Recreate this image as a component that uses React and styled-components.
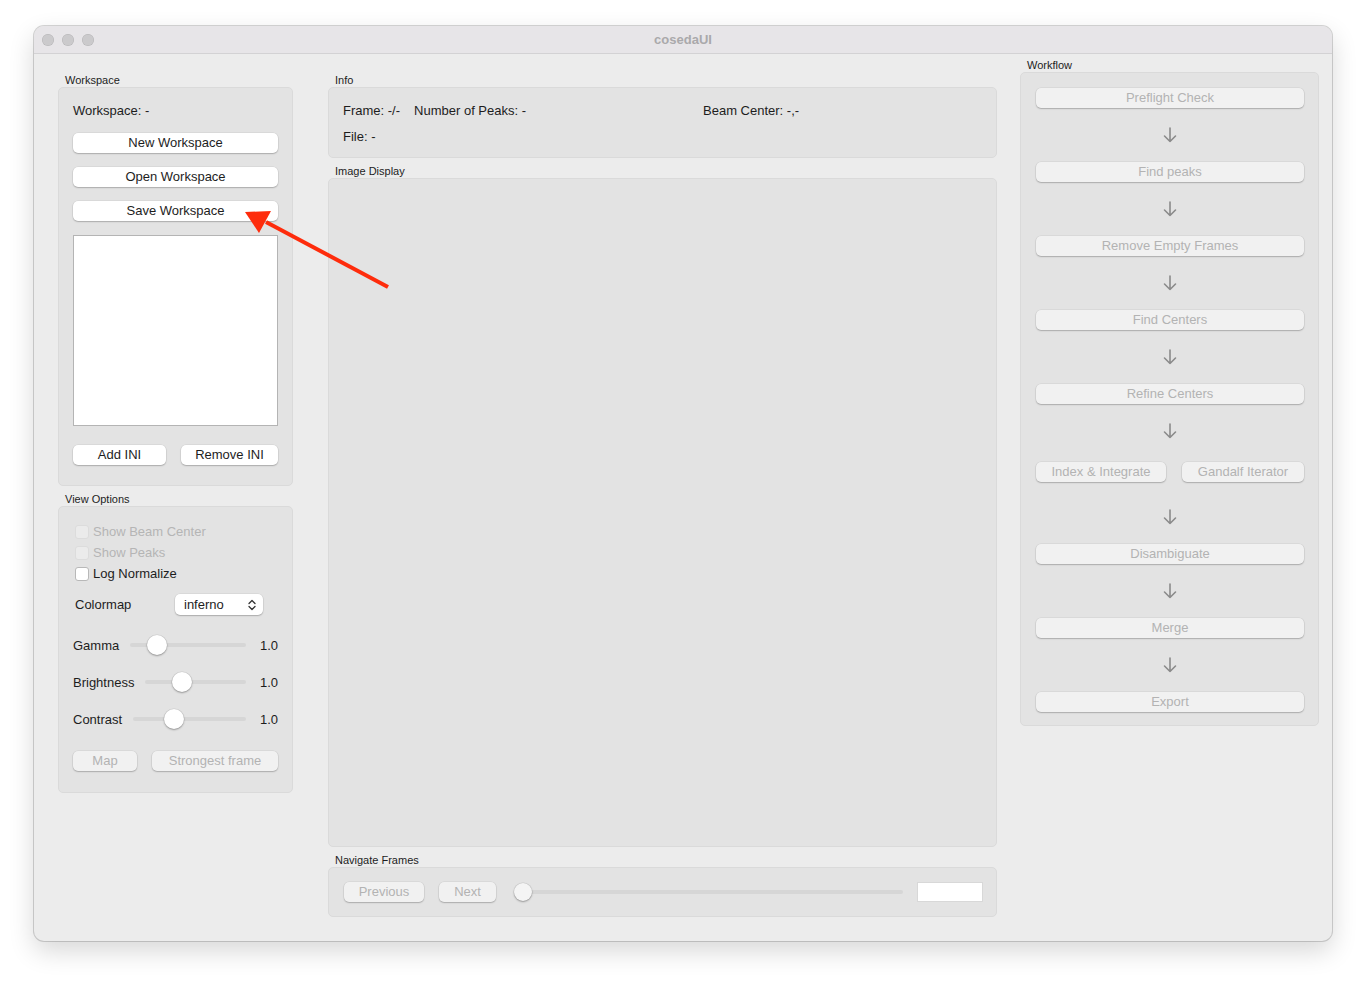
import React from 'react';
import styled, { createGlobalStyle } from 'styled-components';

const GlobalStyle = createGlobalStyle`
  html, body {
    margin: 0;
    padding: 0;
    background: #ffffff;
    overflow: hidden;
  }
  body {
    font-family: "Liberation Sans", Arial, sans-serif;
    color: #1d1d1d;
  }
`;

const Page = styled.div`
  position: relative;
  width: 1366px;
  height: 984px;
  padding: 26px 34px 0;
  box-sizing: border-box;
`;

const Window = styled.div`
  width: 1298px;
  height: 915px;
  border-radius: 10px;
  background: #ececec;
  box-shadow: 0 0 0 1px rgba(0, 0, 0, 0.16), 0 10px 26px rgba(0, 0, 0, 0.16);
  overflow: hidden;
  display: flex;
  flex-direction: column;
`;

const TitleBar = styled.div`
  height: 28px;
  flex-shrink: 0;
  display: grid;
  grid-template-columns: 1fr auto 1fr;
  align-items: center;
  background: #e7e5e8;
  border-bottom: 1px solid #d3d2d4;
  box-sizing: border-box;
`;

const Lights = styled.div`
  display: flex;
  gap: 8px;
  padding-left: 8px;
`;

const Light = styled.span`
  width: 12px;
  height: 12px;
  border-radius: 50%;
  background: #cbcacc;
  box-shadow: inset 0 0 0 0.5px rgba(0, 0, 0, 0.12);
`;

const Title = styled.div`
  font-size: 13px;
  font-weight: bold;
  color: #aaa9ab;
`;

const Body = styled.div`
  flex: 1;
  display: flex;
  align-items: stretch;
  padding: 0 13px 0 24px;
`;

const Column = styled.div`
  width: ${p => p.$width}px;
  margin-right: ${p => p.$gap || 0}px;
  padding-top: ${p => p.$top}px;
  padding-bottom: 24px;
  display: flex;
  flex-direction: column;
  flex-shrink: 0;
  box-sizing: border-box;
`;

const Group = styled.section`
  display: flex;
  flex-direction: column;
  margin-bottom: ${p => (p.$last ? 0 : 6)}px;
  flex: ${p => (p.$grow ? 1 : 'none')};
`;

const GroupLabel = styled.div`
  font-size: 11px;
  line-height: 14px;
  height: 14px;
  margin-left: 7px;
  color: #1d1d1d;
`;

const GroupBox = styled.div`
  background: #e3e3e3;
  border: 1px solid #dadada;
  border-radius: 5px;
  box-sizing: border-box;
  padding: ${p => p.$pad || '14px'};
  flex: 1;
  display: flex;
  flex-direction: column;
`;

const Text = styled.div`
  font-size: 13px;
  line-height: 16px;
  height: 16px;
  white-space: nowrap;
`;

const Button = styled.div`
  height: 20px;
  box-sizing: border-box;
  border-radius: 5px;
  background: ${p => (p.$disabled ? '#f1f1f1' : '#ffffff')};
  color: ${p => (p.$disabled ? '#b3b3b3' : '#1d1d1d')};
  box-shadow: 0 0 0 0.5px rgba(0, 0, 0, 0.08), 0 1px 1.5px rgba(0, 0, 0, 0.22);
  font-size: 13px;
  line-height: 20px;
  text-align: center;
  white-space: nowrap;
  width: ${p => (p.$w ? `${p.$w}px` : 'auto')};
  flex: ${p => (p.$w ? 'none' : 1)};
  margin-left: ${p => p.$ml || 0}px;
`;

const Stack = styled.div`
  display: flex;
  flex-direction: column;
  gap: ${p => p.$gap}px;
  margin-top: ${p => p.$mt || 0}px;
`;

const Row = styled.div`
  display: flex;
  align-items: center;
  gap: ${p => p.$gap || 0}px;
  margin-top: ${p => p.$mt || 0}px;
`;

const ListBox = styled.div`
  height: 191px;
  background: #ffffff;
  border: 1px solid #b4b4b4;
  box-sizing: border-box;
`;

const CheckRow = styled.label`
  display: flex;
  align-items: center;
  gap: 4px;
  height: 21px;
  padding-left: 2px;
  font-size: 13px;
  color: ${p => (p.$disabled ? '#b5b5b5' : '#1d1d1d')};
`;

const Box = styled.span`
  width: 14px;
  height: 14px;
  box-sizing: border-box;
  border-radius: 3px;
  background: ${p => (p.$disabled ? '#ebebeb' : '#ffffff')};
  border: 1px solid ${p => (p.$disabled ? '#dcdcdc' : '#b8b8b8')};
`;

const SelectLabel = styled.div`
  font-size: 13px;
  width: 100px;
  padding-left: 2px;
`;

const Select = styled.div`
  width: 88px;
  height: 21px;
  box-sizing: border-box;
  border-radius: 5px;
  background: #ffffff;
  box-shadow: 0 0 0 0.5px rgba(0, 0, 0, 0.08), 0 1px 1.5px rgba(0, 0, 0, 0.22);
  display: flex;
  align-items: center;
  justify-content: space-between;
  padding: 0 7px 0 9px;
  font-size: 13px;
`;

const SliderRow = styled.div`
  display: flex;
  align-items: center;
  height: 20px;
  margin-top: ${p => p.$mt}px;
  font-size: 13px;
`;

const Track = styled.div`
  position: relative;
  flex: 1;
  height: 4px;
  border-radius: 2px;
  background: #d6d6d6;
  margin: ${p => p.$margin || '0 14px 0 11px'};
`;

const Thumb = styled.span`
  position: absolute;
  top: 50%;
  left: ${p => p.$pos}px;
  width: ${p => p.$size || 20}px;
  height: ${p => p.$size || 20}px;
  margin-top: -${p => (p.$size || 20) / 2}px;
  border-radius: 50%;
  background: ${p => p.$color || '#ffffff'};
  box-shadow: 0 0 0 0.5px rgba(0, 0, 0, 0.1), 0 1px 2px rgba(0, 0, 0, 0.3);
`;

const Value = styled.span`
  width: 18px;
  text-align: right;
`;

const InfoGrid = styled.div`
  display: grid;
  grid-template-columns: 360px 1fr;
  row-gap: 10px;
  font-size: 13px;
  line-height: 16px;
`;

const InfoCell = styled.div`
  display: flex;
  gap: 14px;
  white-space: nowrap;
`;

const NavBox = styled(GroupBox)`
  flex-direction: row;
  align-items: center;
  height: 50px;
  flex: none;
  padding: 0 14px 0 15px;
`;

const TextField = styled.div`
  width: 64px;
  height: 18px;
  background: #ffffff;
  box-shadow: 0 0 0 1px #d8d8d8;
  margin-left: 15px;
`;

const ArrowSlot = styled.div`
  height: 54px;
  display: flex;
  align-items: center;
  justify-content: center;
`;

const PairRow = styled.div`
  display: flex;
  gap: 16px;
  padding: 4px 0 8px;
`;

const Annotation = styled.svg`
  position: absolute;
  left: 0;
  top: 0;
  pointer-events: none;
`;

function DownArrow() {
  return (
    <svg width="14" height="16" viewBox="0 0 14 16">
      <path d="M7 1 V14.5 M1.5 9 L7 14.5 L12.5 9" fill="none" stroke="#8a8a8a" strokeWidth="1.6" strokeLinecap="round" strokeLinejoin="round" />
    </svg>
  );
}

function UpDown() {
  return (
    <svg width="8" height="12" viewBox="0 0 8 12">
      <path d="M1 4.5 L4 1.5 L7 4.5 M1 7.5 L4 10.5 L7 7.5" fill="none" stroke="#333" strokeWidth="1.3" strokeLinecap="round" strokeLinejoin="round" />
    </svg>
  );
}

function Check({ label, disabled }) {
  return (
    <CheckRow $disabled={disabled}>
      <Box $disabled={disabled} />
      {label}
    </CheckRow>
  );
}

function Slider({ label, pos, mt }) {
  return (
    <SliderRow $mt={mt}>
      <span>{label}</span>
      <Track>
        <Thumb $pos={pos} />
      </Track>
      <Value>1.0</Value>
    </SliderRow>
  );
}

function Step({ children, first }) {
  return (
    <>
      {!first && (
        <ArrowSlot>
          <DownArrow />
        </ArrowSlot>
      )}
      {children}
    </>
  );
}

const steps = ['Preflight Check', 'Find peaks', 'Remove Empty Frames', 'Find Centers', 'Refine Centers'];
const tail = ['Disambiguate', 'Merge', 'Export'];

export default function App() {
  return (
    <Page>
      <GlobalStyle />
      <Window>
        <TitleBar>
          <Lights>
            <Light />
            <Light />
            <Light />
          </Lights>
          <Title>cosedaUI</Title>
          <div />
        </TitleBar>
        <Body>
          <Column $width={235} $gap={35} $top={19}>
            <Group>
              <GroupLabel>Workspace</GroupLabel>
              <GroupBox $pad="15px 14px 20px">
                <Text>Workspace: -</Text>
                <Stack $gap={14} $mt={14}>
                  <Button>New Workspace</Button>
                  <Button>Open Workspace</Button>
                  <Button>Save Workspace</Button>
                  <ListBox />
                </Stack>
                <Row $gap={15} $mt={19}>
                  <Button $w={93}>Add INI</Button>
                  <Button>Remove INI</Button>
                </Row>
              </GroupBox>
            </Group>
            <Group>
              <GroupLabel>View Options</GroupLabel>
              <GroupBox $pad="14px 14px 21px">
                <Check label="Show Beam Center" disabled />
                <Check label="Show Peaks" disabled />
                <Check label="Log Normalize" />
                <Row $mt={10}>
                  <SelectLabel>Colormap</SelectLabel>
                  <Select>
                    <span>inferno</span>
                    <UpDown />
                  </Select>
                </Row>
                <Slider label="Gamma" pos={17} mt={20} />
                <Slider label="Brightness" pos={27} mt={17} />
                <Slider label="Contrast" pos={31} mt={17} />
                <Row $gap={15} $mt={22}>
                  <Button $w={64} $disabled>Map</Button>
                  <Button $disabled>Strongest frame</Button>
                </Row>
              </GroupBox>
            </Group>
          </Column>

          <Column $width={669} $gap={23} $top={19}>
            <Group>
              <GroupLabel>Info</GroupLabel>
              <GroupBox $pad="15px 14px 12px">
                <InfoGrid>
                  <InfoCell>
                    <span>Frame: -/-</span>
                    <span>Number of Peaks: -</span>
                  </InfoCell>
                  <InfoCell>Beam Center: -,-</InfoCell>
                  <InfoCell>File: -</InfoCell>
                </InfoGrid>
              </GroupBox>
            </Group>
            <Group $grow>
              <GroupLabel>Image Display</GroupLabel>
              <GroupBox />
            </Group>
            <Group $last>
              <GroupLabel>Navigate Frames</GroupLabel>
              <NavBox>
                <Button $w={80} $disabled>Previous</Button>
                <Button $w={57} $ml={15} $disabled>Next</Button>
                <Track $margin="0 0 0 19px">
                  <Thumb $pos={-1} $size={18} $color="#f4f4f4" />
                </Track>
                <TextField />
              </NavBox>
            </Group>
          </Column>

          <Column $width={299} $top={4}>
            <Group>
              <GroupLabel>Workflow</GroupLabel>
              <GroupBox $pad="15px 14px 13px 15px">
                {steps.map((s, i) => (
                  <Step key={s} first={i === 0}>
                    <Button $disabled>{s}</Button>
                  </Step>
                ))}
                <Step>
                  <PairRow>
                    <Button $w={130} $disabled>Index &amp; Integrate</Button>
                    <Button $disabled>Gandalf Iterator</Button>
                  </PairRow>
                </Step>
                {tail.map(s => (
                  <Step key={s}>
                    <Button $disabled>{s}</Button>
                  </Step>
                ))}
              </GroupBox>
            </Group>
          </Column>
        </Body>
      </Window>
      <Annotation width="1366" height="984" viewBox="0 0 1366 984">
        <line x1="388" y1="287" x2="266" y2="222" stroke="#fe2c0c" strokeWidth="4" />
        <polygon points="245,212 271,211 259,233" fill="#fe2c0c" />
      </Annotation>
    </Page>
  );
}
